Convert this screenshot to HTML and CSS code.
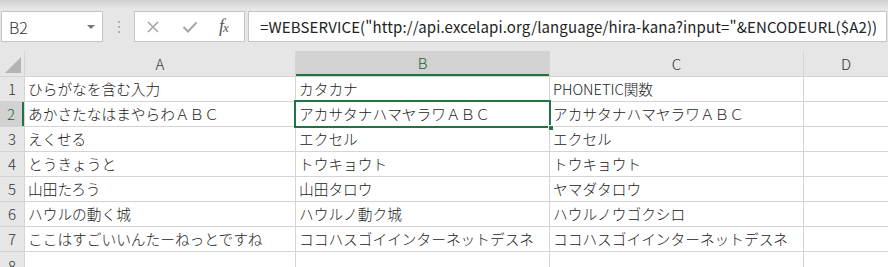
FILE: index.html
```html
<!DOCTYPE html>
<html lang="ja">

<head>
  <meta charset="UTF-8">
  <meta name="viewport" content="width=device-width, initial-scale=1.0">
  <title>WEBSERVICE</title>
  <link rel="stylesheet" href="styles.css">
</head>

<body>
  <div class="formula-bar">
    <div class="name-box">
      <span>B2</span>
      <span class="drop"></span>
    </div>
    <div class="grip"><i></i><i></i><i></i></div>
    <div class="func-box">
      <svg class="ico" width="14" height="14" viewBox="0 0 14 14">
        <path d="M2 2 L12 12 M12 2 L2 12" stroke="#a6a6a6" stroke-width="1.6" fill="none" />
      </svg>
      <svg class="ico" width="16" height="14" viewBox="0 0 16 14">
        <path d="M1.5 7 L6 11.5 L14.5 2.5" stroke="#a6a6a6" stroke-width="2" fill="none" />
      </svg>
      <span class="fx">f<sub>x</sub></span>
    </div>
    <div class="formula">=WEBSERVICE("http://api.excelapi.org/language/hira-kana?input="&amp;ENCODEURL($A2))</div>
  </div>

  <div class="sheet">
    <div class="corner"></div>
    <div class="col-head">A</div>
    <div class="col-head active">B</div>
    <div class="col-head">C</div>
    <div class="col-head">D</div>

    <div class="row-head">1</div>
    <div class="cell">ひらがなを含む入力</div>
    <div class="cell">カタカナ</div>
    <div class="cell">PHONETIC関数</div>
    <div class="cell"></div>

    <div class="row-head active">2</div>
    <div class="cell">あかさたなはまやらわＡＢＣ</div>
    <div class="cell selected">アカサタナハマヤラワＡＢＣ<span class="handle"></span></div>
    <div class="cell">アカサタナハマヤラワＡＢＣ</div>
    <div class="cell"></div>

    <div class="row-head">3</div>
    <div class="cell">えくせる</div>
    <div class="cell">エクセル</div>
    <div class="cell">エクセル</div>
    <div class="cell"></div>

    <div class="row-head">4</div>
    <div class="cell">とうきょうと</div>
    <div class="cell">トウキョウト</div>
    <div class="cell">トウキョウト</div>
    <div class="cell"></div>

    <div class="row-head">5</div>
    <div class="cell">山田たろう</div>
    <div class="cell">山田タロウ</div>
    <div class="cell">ヤマダタロウ</div>
    <div class="cell"></div>

    <div class="row-head">6</div>
    <div class="cell">ハウルの動く城</div>
    <div class="cell">ハウルノ動ク城</div>
    <div class="cell">ハウルノウゴクシロ</div>
    <div class="cell"></div>

    <div class="row-head">7</div>
    <div class="cell">ここはすごいいんたーねっとですね</div>
    <div class="cell">ココハスゴイインターネットデスネ</div>
    <div class="cell">ココハスゴイインターネットデスネ</div>
    <div class="cell"></div>

    <div class="row-head last">8</div>
    <div class="cell"></div>
    <div class="cell"></div>
    <div class="cell"></div>
    <div class="cell"></div>
  </div>
</body>

</html>
```

FILE: styles.css
```css
* {
  margin: 0;
  padding: 0;
  box-sizing: border-box;
}

body {
  width: 888px;
  height: 267px;
  overflow: hidden;
  background-color: #e6e6e6;
  font-family: "Noto Sans CJK JP", "Noto Sans", sans-serif;
  font-weight: 300;
  color: #222;
}

/* formula bar ############################################ */

.formula-bar {
  height: 51px;
  display: flex;
  align-items: flex-start;
  padding-top: 11px;
  padding-left: 1px;
  background: linear-gradient(#cfcfcf 0px, #e6e6e6 8px);
}

.name-box {
  width: 102px;
  height: 31px;
  background: white;
  border: 1px solid #c6c6c6;
  display: flex;
  align-items: center;
  justify-content: space-between;
  padding: 0 7px 0 7px;
  font-size: 16px;
  color: #333;
}

.drop {
  width: 0;
  height: 0;
  border-left: 4px solid transparent;
  border-right: 4px solid transparent;
  border-top: 4px solid #777;
}

.grip {
  width: 31px;
  height: 31px;
  display: flex;
  flex-direction: column;
  align-items: center;
  justify-content: center;
  gap: 3px;
}

.grip i {
  display: block;
  width: 2px;
  height: 2px;
  background: #b0b0b0;
}

.func-box {
  width: 111px;
  height: 31px;
  background: white;
  border: 1px solid #c6c6c6;
  display: flex;
  align-items: center;
  padding-left: 11px;
  gap: 22px;
}

.fx {
  font-family: "Liberation Serif", serif;
  font-style: italic;
  font-weight: 400;
  font-size: 18px;
  color: #555;
  margin-left: -1px;
}

.fx sub {
  font-size: 13px;
  vertical-align: 0;
  margin-left: -1px;
}

.formula {
  flex: 1;
  height: 31px;
  margin-left: 3px;
  margin-right: 1px;
  background: white;
  border: 1px solid #c6c6c6;
  padding-left: 11px;
  font-size: 15px;
  font-weight: 400;
  letter-spacing: 0.12px;
  line-height: 29px;
  white-space: nowrap;
  overflow: hidden;
  color: #222;
}

/* sheet ################################################## */

.sheet {
  display: grid;
  grid-template-columns: 24px 270px 253px 253px 1fr;
  grid-template-rows: 25px repeat(7, 24px) 15px;
  gap: 1px;
  background-color: #d4d4d4;
}

.corner {
  background: #e6e6e6;
  position: relative;
}

.corner::after {
  content: "";
  position: absolute;
  right: 3px;
  bottom: 3px;
  width: 0;
  height: 0;
  border-left: 16px solid transparent;
  border-bottom: 16px solid #b4b4b4;
}

.col-head {
  background: #e6e6e6;
  text-align: center;
  font-size: 15px;
  line-height: 25px;
  color: #333;
}

.col-head.active {
  background: #d2d2d2;
  color: #1e5e3a;
  border-bottom: 2px solid #217346;
  line-height: 24px;
}

.row-head {
  background: #e6e6e6;
  text-align: center;
  font-size: 15px;
  line-height: 24px;
  color: #333;
}

.row-head.last {
  line-height: 27px;
  overflow: hidden;
}

.row-head.active {
  background: #d2d2d2;
  color: #1e5e3a;
  border-right: 2px solid #217346;
}

.cell {
  background: white;
  font-size: 14.7px;
  line-height: 24px;
  padding-left: 3px;
  white-space: nowrap;
  overflow: visible;
  position: relative;
}

.cell.selected {
  outline: 2px solid #217346;
  outline-offset: 0px;
  z-index: 1;
}

.handle {
  position: absolute;
  right: -5px;
  bottom: -5px;
  width: 6px;
  height: 6px;
  background: #217346;
  border: 1px solid white;
}
```
